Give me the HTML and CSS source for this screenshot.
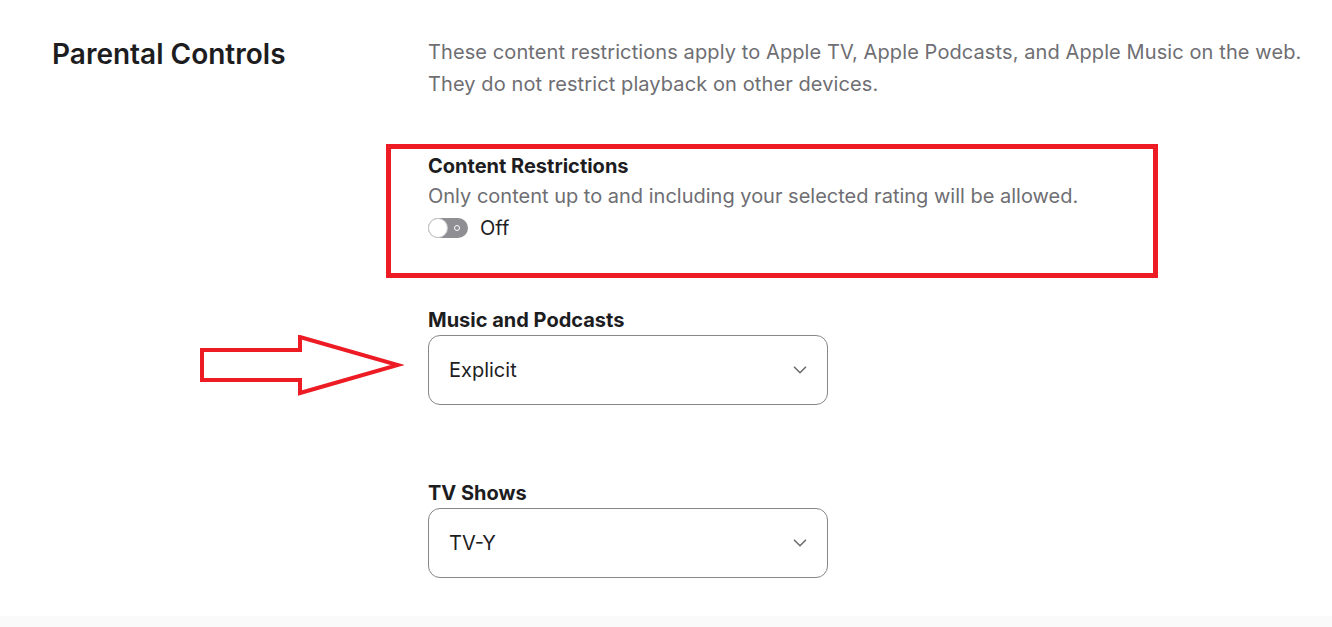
FILE: index.html
```html
<!DOCTYPE html>
<html>

<head>
    <meta name="viewport" content="width=device-width">
    <link rel="stylesheet" href="styles.css">
    <title>Parental Controls</title>
</head>

<body>
    <main class="section">
        <h2 class="section-title">Parental Controls</h2>
        <div class="section-body">
            <p class="intro">These content restrictions apply to Apple TV, Apple Podcasts, and Apple Music on the web.
                They do not restrict playback on other devices.</p>

            <div class="restrictions">
                <h3 class="label">Content Restrictions</h3>
                <p class="hint">Only content up to and including your selected rating will be allowed.</p>
                <div class="toggle-row">
                    <span class="toggle"><span class="knob"></span><span class="off-mark"></span></span>
                    <span>Off</span>
                </div>
            </div>

            <div class="field field-music">
                <h3 class="label">Music and Podcasts</h3>
                <div class="select">
                    <span>Explicit</span>
                    <svg width="14" height="8" viewBox="0 0 14 8"><path d="M1.5 1.2l5.5 5.5 5.5-5.5" fill="none" stroke="#6e6e73" stroke-width="1.6" stroke-linecap="round" stroke-linejoin="round"/></svg>
                </div>
                <svg class="arrow" width="206" height="62" viewBox="0 0 206 62">
                    <path d="M4 15H102V2L200 30L102 58V45H4Z" fill="none" stroke="#ed1c24" stroke-width="4" stroke-linejoin="miter"/>
                </svg>
            </div>

            <div class="field field-tv">
                <h3 class="label">TV Shows</h3>
                <div class="select">
                    <span>TV-Y</span>
                    <svg width="14" height="8" viewBox="0 0 14 8"><path d="M1.5 1.2l5.5 5.5 5.5-5.5" fill="none" stroke="#6e6e73" stroke-width="1.6" stroke-linecap="round" stroke-linejoin="round"/></svg>
                </div>
            </div>
        </div>
    </main>
    <footer class="footer"></footer>
</body>

</html>
```

FILE: styles.css
```css
body,
html {
    margin: 0;
    height: 100%;
    background: #fff;
}

body {
    display: flex;
    flex-direction: column;
    font-family: Inter, "Liberation Sans", sans-serif;
    color: #1d1d1f;
    font-size: 20px;
    overflow: hidden;
}

h2, h3, p {
    margin: 0;
}

.section {
    flex: 1;
    display: grid;
    grid-template-columns: 376px 1fr;
    align-items: start;
    padding: 36px 0 0 52px;
}

.section-title {
    font-size: 28px;
    font-weight: 600;
    line-height: 36px;
}

.section-body {
    display: flex;
    flex-direction: column;
}

.intro {
    max-width: 885px;
    color: #6e6e73;
    line-height: 32px;
    letter-spacing: 0.1px;
}

.restrictions {
    box-sizing: border-box;
    margin: 44px 0 0 -42px;
    width: 772px;
    height: 134px;
    border: 5px solid #ed1c24;
    padding: 2px 0 0 37px;
}

.label {
    font-size: 20px;
    font-weight: 700;
    line-height: 30px;
}

.hint {
    color: #6e6e73;
    line-height: 31px;
}

.toggle-row {
    display: flex;
    align-items: center;
    gap: 12px;
    height: 32px;
}

.toggle {
    position: relative;
    width: 40px;
    height: 20px;
    border-radius: 10px;
    background: #8e8e93;
}

.toggle .knob {
    position: absolute;
    left: 0;
    top: 0;
    width: 18px;
    height: 18px;
    border-radius: 50%;
    background: #fff;
    border: 1px solid #c7c7cc;
}

.toggle .off-mark {
    position: absolute;
    right: 8px;
    top: 7px;
    width: 6px;
    height: 6px;
    border-radius: 50%;
    border: 1px solid #fff;
    box-sizing: border-box;
}

.field {
    position: relative;
    width: 400px;
}

.field-music {
    margin-top: 27px;
}

.field-tv {
    margin-top: 73px;
}

.select {
    display: flex;
    align-items: center;
    justify-content: space-between;
    height: 68px;
    border: 1px solid #86868b;
    border-radius: 12px;
    padding: 0 20px 0 20px;
}

.arrow {
    position: absolute;
    left: -230px;
    top: 30px;
}

.footer {
    height: 11px;
    background: #fafafa;
}
```
